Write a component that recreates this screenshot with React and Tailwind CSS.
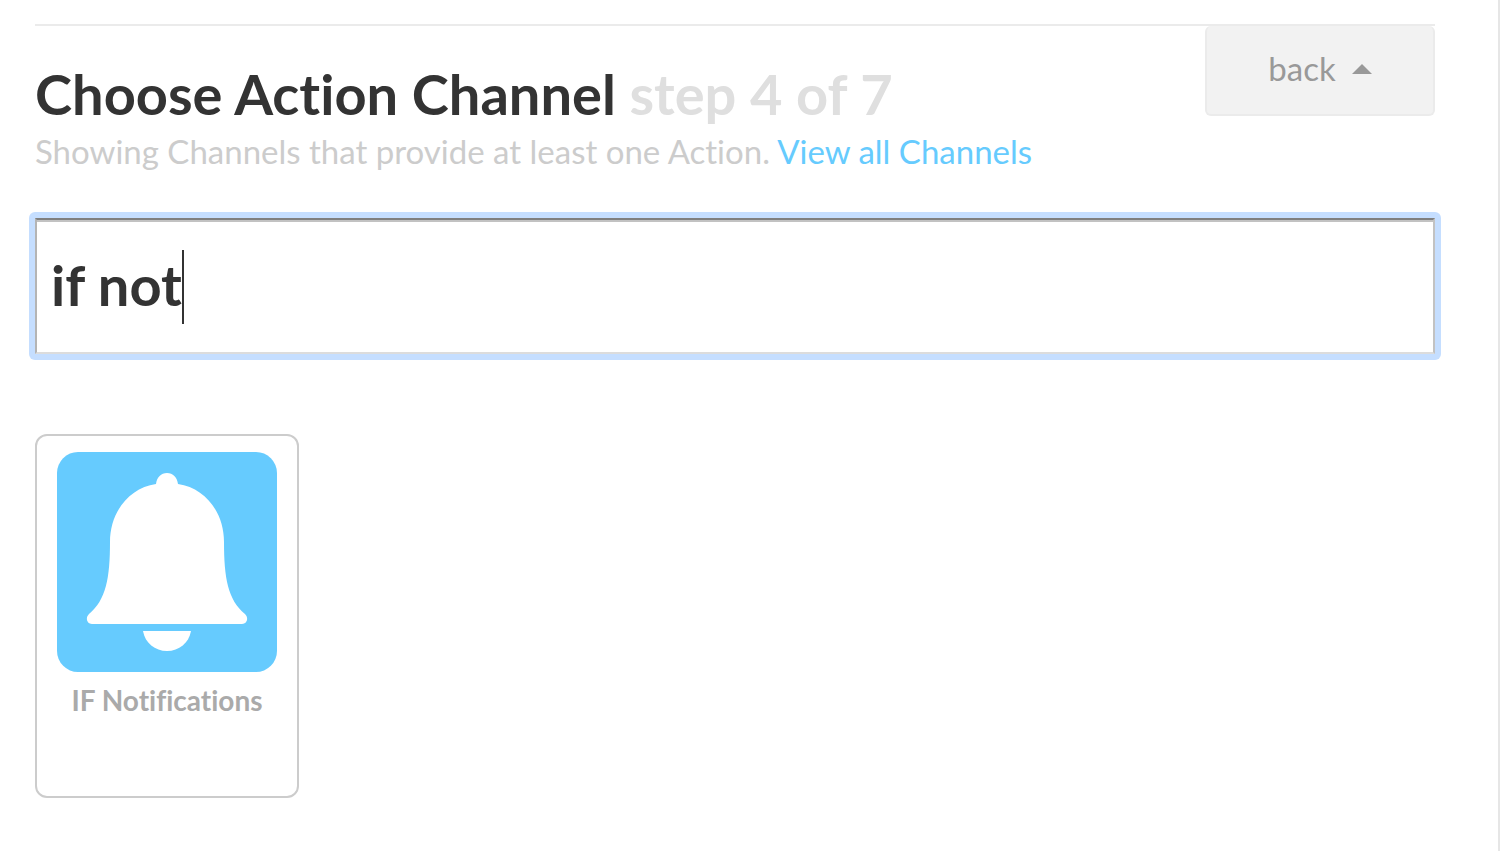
import { useState } from 'react'

const channels = [{ id: 'if-notifications', name: 'IF Notifications', icon: BellIcon }]

function BellIcon() {
  return (
    <svg viewBox="0 0 220 220" className="block w-full" aria-hidden="true">
      <rect width="220" height="220" rx="21" fill="#66cbfe" />
      <g fill="#fff">
        <path d="M99 32C100 25 104 21 110 21C116 21 120 25 121 32C148 36 167 60 167 90C167 126 171 148 188 162C192 166 190 172 185 172H35C30 172 28 166 32 162C49 148 53 126 53 90C53 60 72 36 99 32Z" />
        <path d="M86 179H134C132 191 122 199 110 199C98 199 88 191 86 179Z" />
      </g>
    </svg>
  )
}

export default function App() {
  const [query, setQuery] = useState('if not')
  const [typing, setTyping] = useState(false)

  const visible = channels.filter((channel) =>
    channel.name.toLowerCase().startsWith(query.trim().toLowerCase())
  )

  const handleChange = (e) => {
    setTyping(true)
    setQuery(e.target.value)
  }

  return (
    <div className="min-h-screen border-r-2 border-[#e6e6e6] bg-white pt-6 pr-[63px] pl-[35px] font-['Lato',sans-serif] text-[#333] [font-variant-ligatures:none]">
      <header className="flex items-start justify-between border-t-2 border-[#ebebeb]">
        <div className="pt-[34px]">
          <h1 className="text-[56px] leading-[68px] font-bold">
            Choose Action Channel <span className="text-[#dfdfdf]">step 4 of 7</span>
          </h1>
          <p className="text-[33px] leading-[46px] text-[#ccc]">
            Showing Channels that provide at least one Action.{' '}
            <a href="#channels" className="text-[#66cbfe]">View all Channels</a>
          </p>
        </div>
        <button
          type="button"
          className="flex h-[90px] w-[230px] items-center justify-center gap-4 rounded-md border-2 border-t-0 border-[#ebebeb] bg-[#f2f2f2] pb-0.5 text-[33px] text-[#999]"
        >
          back
          <svg viewBox="0 0 20 10" className="w-5" aria-hidden="true">
            <path d="M0 10L10 0L20 10Z" fill="#999" />
          </svg>
        </button>
      </header>

      {/* Channel search */}
      <div className="relative -mx-1.5 mt-[38px] rounded-md bg-[#c5deff] p-1.5">
        <input
          type="text"
          aria-label="Search Channels"
          value={query}
          onChange={handleChange}
          className={`block h-[136px] w-full border-2 border-t-[#7f7f7f] border-r-[#c2c2c2] border-b-[#dcdcdc] border-l-[#b4b4b4] bg-white px-[14px] pb-1 text-[56px] font-bold shadow-[inset_0_2px_0_#c2c2c2] outline-none ${typing ? '' : 'caret-transparent'}`}
        />
        {!typing && <span className="absolute top-[38px] left-[153px] h-[74px] w-0.5 bg-[#333]" />}
      </div>

      {/* Matching channels */}
      <ul className="mt-[74px] flex flex-wrap gap-6">
        {visible.map(({ id, name, icon: Icon }) => (
          <li key={id}>
            <a
              href={`#${id}`}
              className="block h-[364px] w-[264px] rounded-xl border-2 border-[#ccc] px-5 pt-4 text-center text-[28px] leading-9 font-bold text-[#aaa]"
            >
              <Icon />
              <span className="mt-2.5 block">{name}</span>
            </a>
          </li>
        ))}
      </ul>
    </div>
  )
}
